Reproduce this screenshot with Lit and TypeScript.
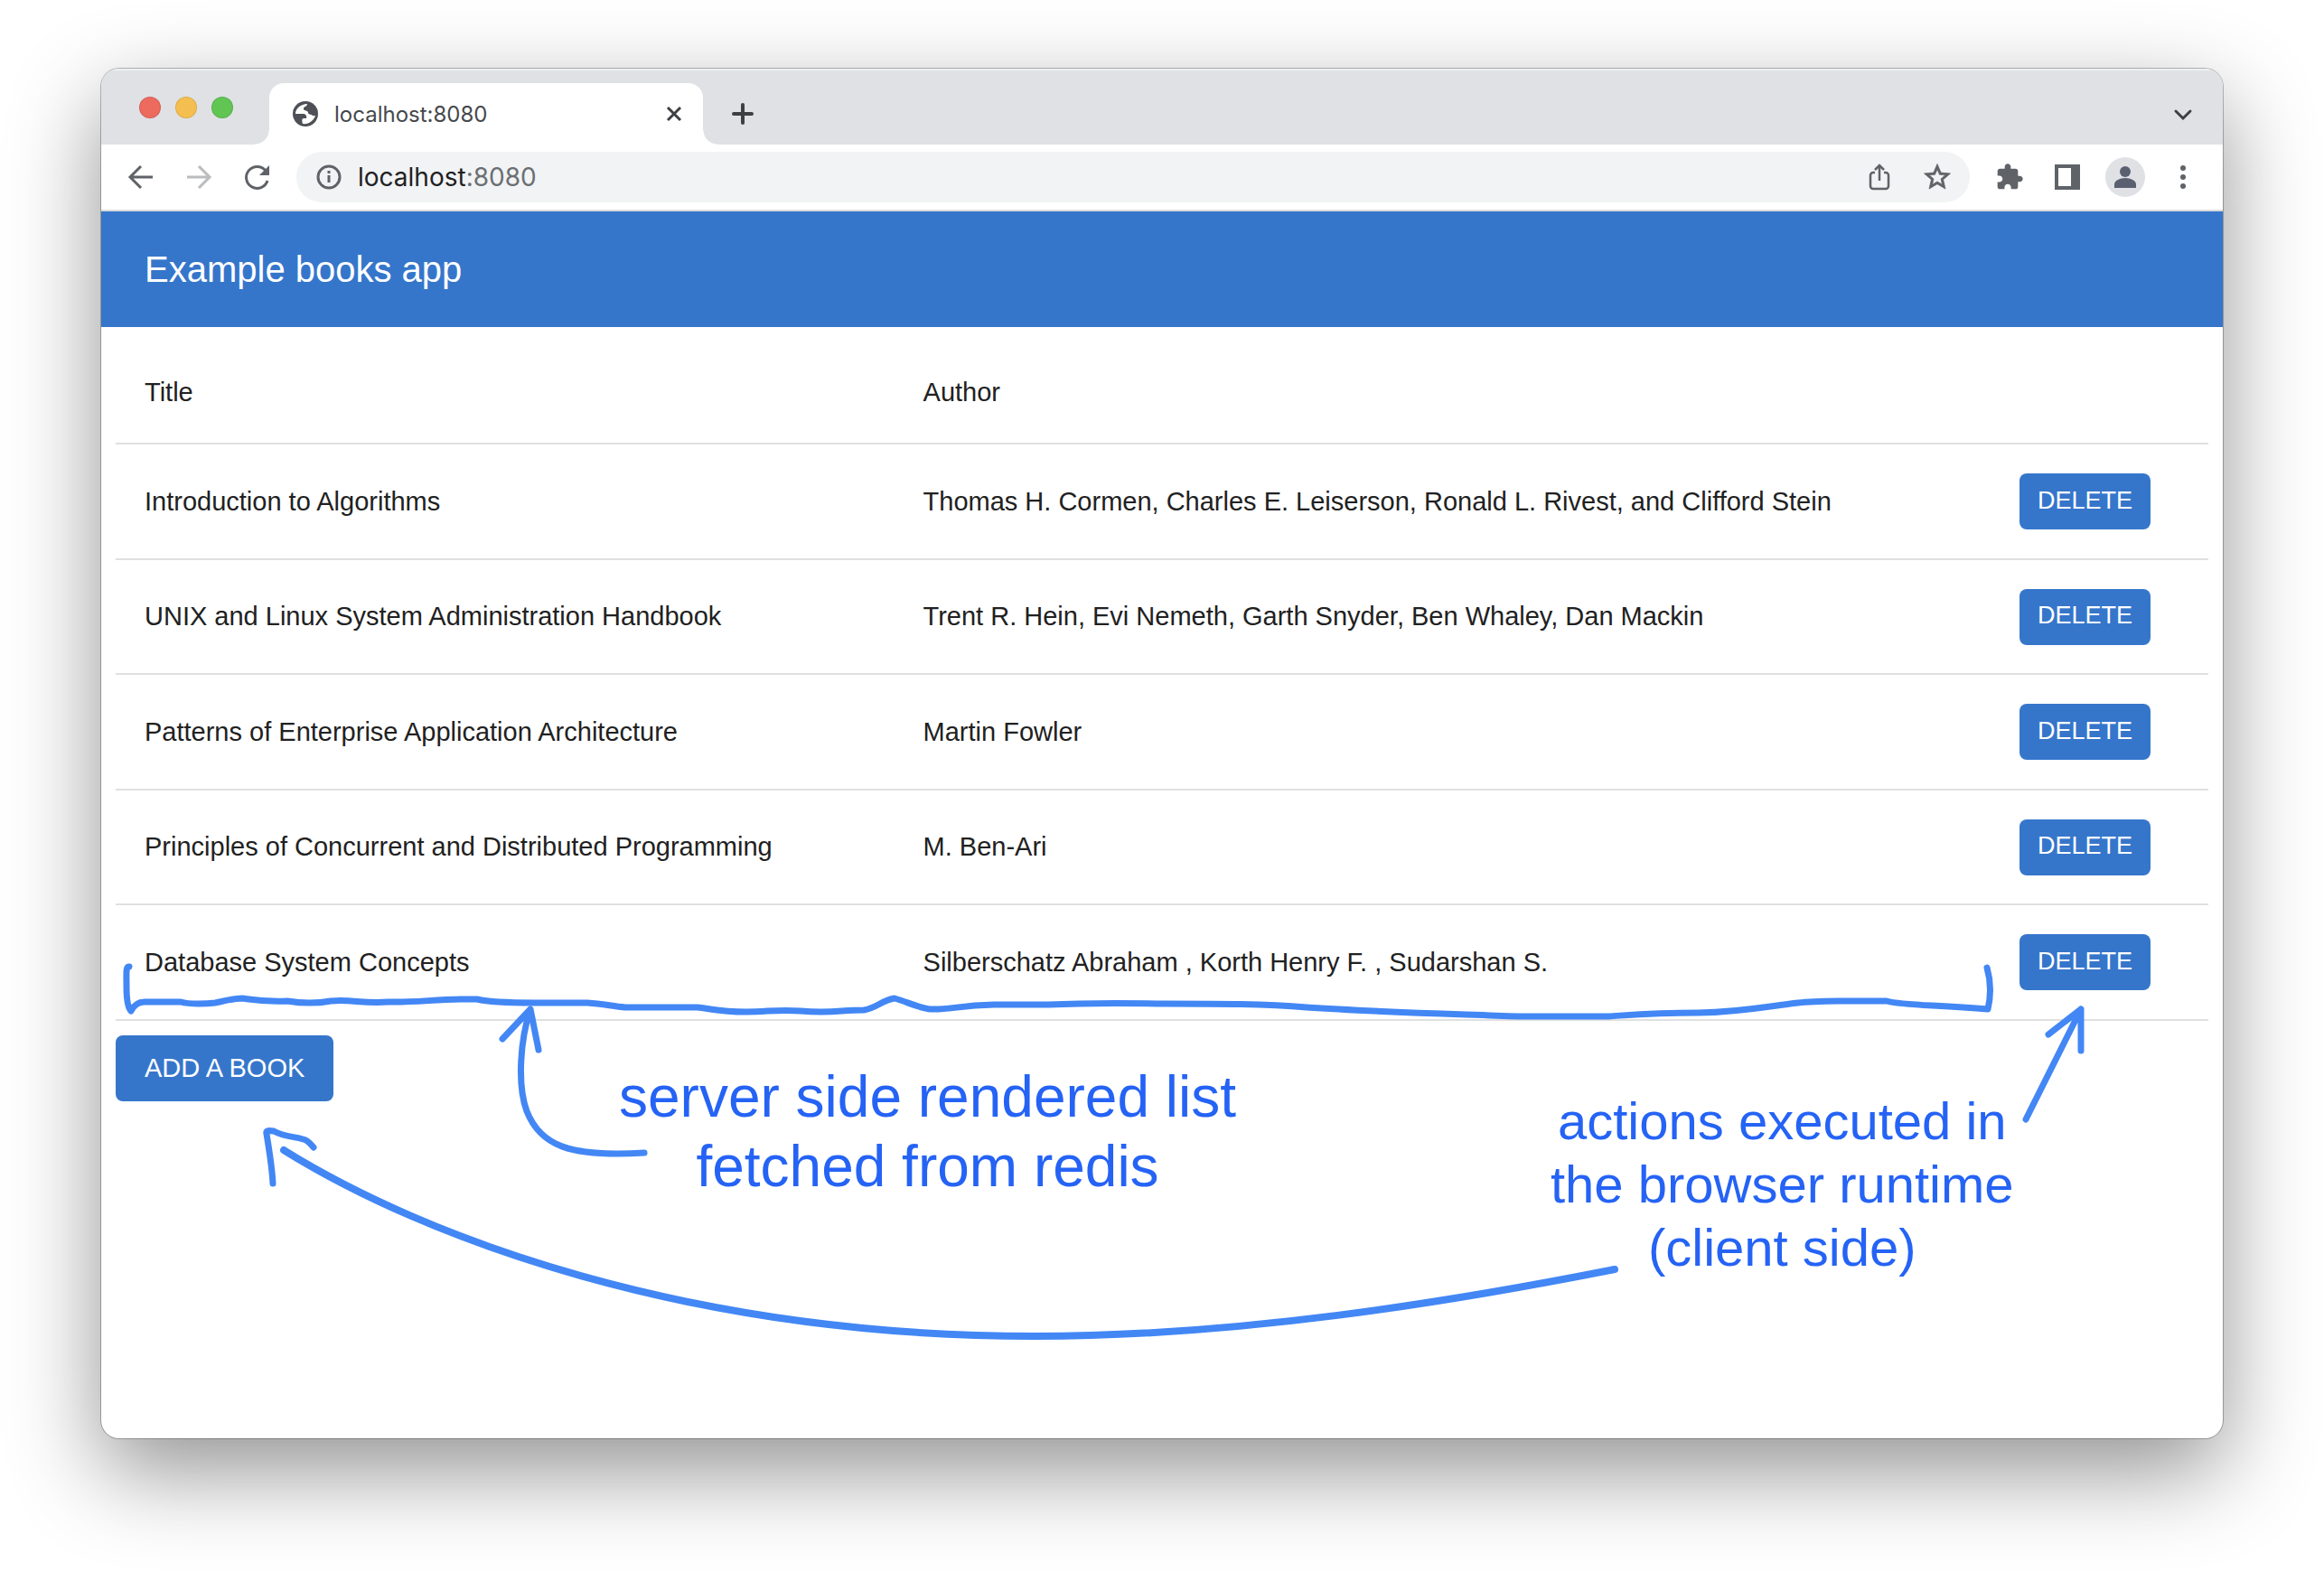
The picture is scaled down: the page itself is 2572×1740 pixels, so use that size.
import { LitElement, html, css, svg } from "lit";
import { customElement, state } from "lit/decorators.js";

interface Book {
  title: string;
  author: string;
}

const BOOKS: Book[] = [
  { title: "Introduction to Algorithms", author: "Thomas H. Cormen, Charles E. Leiserson, Ronald L. Rivest, and Clifford Stein" },
  { title: "UNIX and Linux System Administration Handbook", author: "Trent R. Hein, Evi Nemeth, Garth Snyder, Ben Whaley, Dan Mackin" },
  { title: "Patterns of Enterprise Application Architecture", author: "Martin Fowler" },
  { title: "Principles of Concurrent and Distributed Programming", author: "M. Ben-Ari" },
  { title: "Database System Concepts", author: "Silberschatz Abraham , Korth Henry F. , Sudarshan S." },
];

/** Title bar with traffic lights and tabs, and the toolbar under it. */
@customElement("browser-chrome")
export class BrowserChrome extends LitElement {
  static styles = css`
    :host { display: block; font-family: Inter, "Open Sans", sans-serif; }
    button { border: 0; padding: 0; background: none; display: flex; flex: none; }
    svg { display: block; }
    .strip { display: flex; height: 84px; background: #dfe1e5; box-shadow: inset 0 2px 1px #eef0f2; }
    .lights { display: flex; gap: 16px; padding: 31px 40px 0 42px; }
    .light { width: 24px; height: 24px; border-radius: 50%; box-sizing: border-box; border: 1px solid rgb(0 0 0 / 10%); }
    .close { background: #ed6a5e; }
    .minimize { background: #f5bf4f; }
    .zoom { background: #61c554; }
    .tab {
      position: relative; display: flex; align-items: center; gap: 18px; box-sizing: border-box;
      width: 480px; margin-top: 16px; padding: 0 22px 0 26px; background: #fff;
      border-radius: 16px 16px 0 0; color: #45484c;
    }
    .tab::before, .tab::after { content: ""; position: absolute; bottom: 0; width: 16px; height: 16px; }
    .tab::before { left: -16px; background: radial-gradient(circle at 0 0, transparent 15px, #fff 16px); }
    .tab::after { right: -16px; background: radial-gradient(circle at 100% 0, transparent 15px, #fff 16px); }
    .tab-title { flex: 1; font-size: 24px; }
    .add { padding: 38px 0 0 32px; align-self: flex-start; }
    .search { margin-left: auto; padding: 38px 32px 0 0; align-self: flex-start; }
    .bar {
      display: flex; align-items: center; height: 72px; padding: 0 28px;
      background: #fff; border-bottom: 2px solid #dadcdd;
    }
    .nav { display: flex; gap: 32px; margin-right: 28px; }
    .omnibox {
      flex: 1; min-width: 0; display: flex; align-items: center; height: 56px; box-sizing: border-box;
      margin-right: 28px; padding: 0 20px; border-radius: 28px; background: #f1f3f4;
    }
    .address { flex: 1; padding-left: 16px; font-size: 28px; color: #6b6e72; text-decoration: none; }
    .host { color: #1f2124; }
    .actions { display: flex; gap: 32px; }
    .tools { display: flex; align-items: center; gap: 32px; }
    .avatar { width: 44px; height: 44px; margin: 0 -6px; }
  `;

  render() {
    const stroke = (color: string, body: unknown) => html`
      <svg width="32" height="32" viewBox="0 0 32 32" fill="none" stroke=${color} stroke-width="3">${body}</svg>`;
    return html`
      <div class="strip">
        <div class="lights">
          <button class="light close" aria-label="Close window"></button>
          <button class="light minimize" aria-label="Minimize window"></button>
          <button class="light zoom" aria-label="Zoom window"></button>
        </div>
        <div class="tab">
          <svg width="28" height="28" viewBox="0 0 28 28">
            <circle cx="14" cy="14" r="14" fill="#4d5056"/>
            <path fill="#fff" d="M16 3C9 3 3 8 3 14H11C14 14 16 16 15 19H12C10 19 10 22 11 25C17 26 23 22 25 16H22C21 14 17 15 17 13C18 10 13 11 12 9C12 7 15 7 16 5Z"/>
            <path fill="#4d5056" d="M16 3C16 6 12 6 12 8C12 11 16 9 17 12C18 15 21 14 22 15H26V8L20 2Z"/>
          </svg>
          <span class="tab-title">localhost:8080</span>
          <button aria-label="Close tab">
            <svg width="20" height="20" viewBox="0 0 20 20" stroke="#3c4043" stroke-width="3"><path d="M3 3 17 17M17 3 3 17"/></svg>
          </button>
        </div>
        <button class="add" aria-label="New tab">
          <svg width="24" height="24" viewBox="0 0 24 24" stroke="#3c4043" stroke-width="4" stroke-linecap="round"><path d="M12 2v20M2 12h20"/></svg>
        </button>
        <button class="search" aria-label="Search tabs">
          <svg width="24" height="24" viewBox="0 0 24 24" fill="none" stroke="#3c4043" stroke-width="3" stroke-linecap="round"><path d="M4 9l8 8 8-8"/></svg>
        </button>
      </div>
      <div class="bar">
        <div class="nav">
          <button aria-label="Back">${stroke("#5f6368", svg`<path d="M16 4 4 16l12 12M4 16h25"/>`)}</button>
          <button aria-label="Forward">${stroke("#babcbe", svg`<path d="M16 4l12 12-12 12M28 16H3"/>`)}</button>
          <button aria-label="Reload">${stroke("#5f6368", svg`<path d="M26 9A12 12 0 1 0 28 20"/><path d="M30 3v11H19z" fill="#5f6368" stroke="none"/>`)}</button>
        </div>
        <div class="omnibox">
          <svg width="32" height="32" viewBox="0 0 32 32" fill="none" stroke="#5f6368" stroke-width="3"><circle cx="16" cy="16" r="12"/><path d="M16 14v8M16 9v3"/></svg>
          <a class="address" href="#"><span class="host">localhost</span>:8080</a>
          <div class="actions">
            <button aria-label="Share">${stroke("#5f6368", svg`<path d="M11 11H9a3 3 0 0 0-3 3v12a3 3 0 0 0 3 3h14a3 3 0 0 0 3-3V14a3 3 0 0 0-3-3h-2M16 20V4M11 8l5-5 5 5" stroke-width="2.500"/>`)}</button>
            <button aria-label="Bookmark">
              <svg width="32" height="32" viewBox="1 1 22 22" fill="#5f6368" stroke="#5f6368" stroke-width=".5"><path d="M22 9.240l-7.190-.62L12 2 9.190 8.630 2 9.240l5.460 4.730L5.820 21 12 17.270 18.180 21l-1.630-7.030L22 9.240zM12 15.400l-3.760 2.270 1-4.280-3.320-2.880 4.380-.38L12 6.100l1.710 4.040 4.380.38-3.320 2.880 1 4.280L12 15.400z"/></svg>
            </button>
          </div>
        </div>
        <div class="tools">
          <button aria-label="Extensions">
            <svg width="32" height="32" viewBox="0 0 24 24" fill="#5f6368"><path d="M20.500 11H19V7c0-1.100-.9-2-2-2h-4V3.500C13 2.120 11.880 1 10.500 1S8 2.120 8 3.500V5H4c-1.100 0-1.990.9-1.990 2v3.800H3.500c1.490 0 2.700 1.210 2.700 2.700s-1.210 2.700-2.700 2.700H2V20c0 1.100.9 2 2 2h3.800v-1.500c0-1.490 1.210-2.700 2.700-2.700s2.700 1.210 2.700 2.700V22H17c1.100 0 2-.9 2-2v-4h1.500c1.380 0 2.500-1.120 2.500-2.500S21.880 11 20.500 11z"/></svg>
          </button>
          <button aria-label="Side panel">
            <svg width="32" height="32" viewBox="0 0 32 32" fill="#5f6368"><path fill-rule="evenodd" d="M2 2h28v28H2zM6 6v20h14V6z"/></svg>
          </button>
          <button class="avatar" aria-label="Profile">
            <svg width="44" height="44" viewBox="0 0 44 44"><circle cx="22" cy="22" r="22" fill="#dfe1e5"/><g fill="#5a6070"><circle cx="22" cy="16" r="6"/><path d="M10 34v-4c0-4 6-7 12-7s12 3 12 7v4z"/></g></svg>
          </button>
          <button aria-label="Menu">
            <svg width="32" height="32" viewBox="0 0 32 32" fill="#5f6368"><circle cx="16" cy="6" r="3"/><circle cx="16" cy="16" r="3"/><circle cx="16" cy="26" r="3"/></svg>
          </button>
        </div>
      </div>
    `;
  }
}

/** Notes and hand-drawn arrows laid over the page. */
@customElement("page-notes")
export class PageNotes extends LitElement {
  static styles = css`
    :host { display: block; position: absolute; inset: 0; pointer-events: none; color: #2563f5; }
    .ink { position: absolute; left: 0; top: 0; overflow: visible; }
    .note { position: absolute; margin: 0; text-align: center; white-space: nowrap; }
    .server { left: 573px; top: 1100px; font-size: 64px; line-height: 77px; }
    .client { left: 1604px; top: 1130px; font-size: 58px; line-height: 70px; }
  `;

  render() {
    return html`
      <svg class="ink" width="2348" height="1516" viewBox="112 76 2348 1516" fill="none" stroke="#4387f5" stroke-width="7" stroke-linecap="round" stroke-linejoin="round">
        <path d="M143 1070C139 1069 140 1078 140 1092C140 1106 142 1116 145 1119C148 1113 152 1109 160 1109H200C210 1112 230 1111 238 1110C250 1108 256 1105 268 1105C282 1107 290 1109 318 1108C336 1111 350 1111 366 1108C390 1106 400 1111 430 1109C460 1110 490 1105 528 1106C545 1110 570 1110 590 1110H650C668 1111 678 1114 692 1115H772C790 1117 796 1120 826 1120C850 1120 860 1117 886 1119C920 1122 930 1118 956 1118C970 1116 976 1107 990 1105C1004 1109 1018 1116 1030 1117C1050 1118 1060 1113 1100 1112H1160C1200 1110 1240 1110 1290 1111C1350 1111 1400 1111 1446 1115C1520 1120 1600 1122 1680 1125H1780C1810 1123 1830 1121 1880 1121C1930 1120 1960 1113 1990 1110C2015 1107 2060 1108 2088 1108C2105 1113 2140 1112 2200 1117C2204 1100 2203 1085 2199 1071"/>
        <path d="M556 1150 587 1117 596 1162M587 1117C576 1150 572 1200 583 1230C598 1268 630 1281 713 1276"/>
        <path d="M302 1310C301 1290 297 1268 295 1255C294 1251 298 1251 303 1252C318 1260 333 1258 340 1263C344 1266 345 1268 347 1270"/>
        <path d="M314 1273C470 1370 760 1479 1145 1479C1370 1479 1600 1442 1787 1405" stroke-width="8"/>
        <path d="M2267 1145 2303 1117V1163M2303 1117 2242 1239"/>
      </svg>
      <p class="note server">server side rendered list<br />fetched from redis</p>
      <p class="note client">actions executed in<br />the browser runtime<br />(client side)</p>
    `;
  }
}

@customElement("app-root")
export class AppRoot extends LitElement {
  static styles = css`
    :host {
      display: flex; box-sizing: border-box; min-height: 100vh; padding: 76px 112px 148px;
      background: #fff; color: #212121; font-family: "Liberation Sans", Arial, sans-serif;
    }
    .window {
      position: relative; flex: 1; min-width: 0; background: #fff; border-radius: 20px;
      box-shadow: 0 0 0 1px rgb(0 0 0 / 26%), 0 36px 100px rgb(0 0 0 / 43%);
    }
    browser-chrome { border-radius: 20px 20px 0 0; overflow: hidden; }
    .appbar { display: flex; align-items: center; height: 128px; padding: 0 48px; background: #3576cb; color: #fff; }
    .heading { margin: 0; font-size: 40px; font-weight: 400; }
    .content { padding: 16px; }
    .books { width: 100%; border-collapse: separate; border-spacing: 0; table-layout: fixed; font-size: 29px; }
    .row { height: 128px; }
    .row:nth-child(even) { height: 127px; }
    .head { height: 114px; }
    .cell { box-sizing: border-box; padding: 0 32px; text-align: left; font-weight: 400; border-bottom: 2px solid #e0e0e0; }
    .col-title { width: 37.2%; }
    .col-action { width: 241px; }
    .button {
      display: block; border: 0; border-radius: 8px; background: #3576cb; color: #fff;
      font-family: inherit; text-transform: uppercase; white-space: nowrap;
    }
    .delete { height: 62px; padding: 0 20px 2px; font-size: 27px; }
    .create { height: 73px; margin-top: 16px; padding: 0 32px; font-size: 29px; }
  `;

  @state() private books = BOOKS;

  private remove(book: Book) {
    this.books = this.books.filter((b) => b !== book);
  }

  render() {
    return html`
      <div class="window">
        <browser-chrome></browser-chrome>
        <header class="appbar"><h1 class="heading">Example books app</h1></header>
        <main class="content">
          <table class="books">
            <colgroup><col class="col-title" /><col /><col class="col-action" /></colgroup>
            <thead>
              <tr class="head">
                <th class="cell" scope="col">Title</th>
                <th class="cell" scope="col">Author</th>
                <td class="cell"></td>
              </tr>
            </thead>
            <tbody>
              ${this.books.map((book) => html`
                <tr class="row">
                  <td class="cell">${book.title}</td>
                  <td class="cell">${book.author}</td>
                  <td class="cell"><button class="button delete" @click=${() => this.remove(book)}>Delete</button></td>
                </tr>`)}
            </tbody>
          </table>
          <button class="button create">Add a book</button>
        </main>
        <page-notes></page-notes>
      </div>
    `;
  }
}
